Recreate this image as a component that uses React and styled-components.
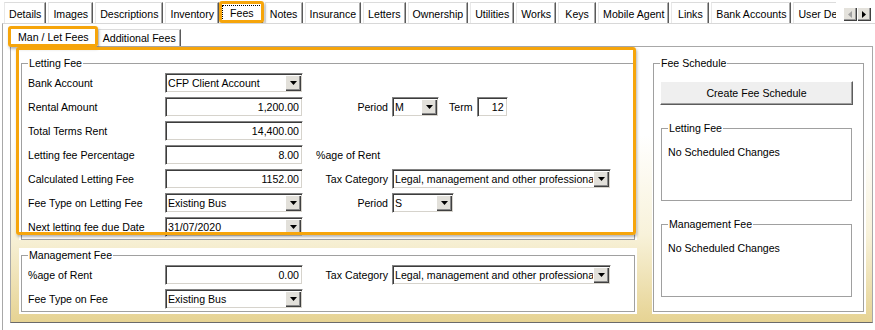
import React from 'react';
import styled, { createGlobalStyle } from 'styled-components';

const GlobalStyle = createGlobalStyle`
  html, body {
    margin: 0;
    padding: 0;
    background: #fff;
  }
  body {
    font-family: "Liberation Sans", Arial, sans-serif;
    font-size: 10.6px;
    color: #000;
  }
`;

const ORANGE = '#f6a50b';

// window + outer tab control
const Window = styled.div`
  width: 875px;
  height: 330px;
  overflow: hidden;
  background: #fff;
`;

const TabBar = styled.div`
  display: flex;
  align-items: flex-end;
  height: 23px;
  padding-left: 4px;
`;

const TabStrip = styled.div`
  display: flex;
  align-items: flex-end;
  gap: 2px;
  width: 832px;
  height: 23px;
  overflow: hidden;
  flex: none;
`;

const Tab = styled.div`
  position: relative;
  flex: none;
  box-sizing: border-box;
  height: 21px;
  min-width: ${p => p.$min || 0}px;
  padding: 2px ${p => p.$pad ?? 4}px 0;
  display: flex;
  align-items: center;
  justify-content: center;
  background: #fff;
  border-top: 1px solid #dcdcdc;
  border-left: 1px solid #e8e8e8;
  border-right: 1px solid #5a5a5a;
  box-shadow: inset -1px 0 0 #a8a8a8;
  white-space: nowrap;
`;

const Focus = styled.span`
  outline: 1px dotted #000;
  outline-offset: 0;
  padding: 1px 7px 3px;
`;

const ScrollBox = styled.div`
  align-self: flex-start;
  display: flex;
  margin-top: 7px;
  margin-left: 7px;
`;

const ScrollBtn = styled.div`
  width: 14px;
  height: 14px;
  box-sizing: border-box;
  display: flex;
  align-items: center;
  justify-content: center;
  background: #e4e2dc;
  box-shadow: inset 1px 1px 0 #fff, inset -1px -1px 0 #404040, inset -2px -2px 0 #9a9a9a;
`;

const OuterPage = styled.div`
  border-top: 1px solid #d8d8d8;
  border-left: 1px solid #a8a8a8;
  margin-left: 2px;
  padding-left: 7px;
  height: 306px;
  background: #fff;
`;

// inner tab control
const InnerTabBar = styled.div`
  display: flex;
  align-items: flex-end;
  gap: 1px;
  height: 22px;
`;

const InnerTab = styled.div`
  position: relative;
  box-sizing: border-box;
  height: ${p => (p.$active ? 19 : 17)}px;
  padding: 0 ${p => (p.$active ? 7 : 4)}px;
  display: flex;
  align-items: center;
  background: #fff;
  border-top: 1px solid #dcdcdc;
  border-left: 1px solid #e8e8e8;
  border-right: 1px solid #5a5a5a;
  box-shadow: inset -1px 0 0 #a8a8a8;
  white-space: nowrap;
`;

const InnerPage = styled.div`
  box-sizing: border-box;
  width: 863px;
  height: 277px;
  display: flex;
  gap: 15px;
  padding: 9px 6px 8px 8px;
  border: 1px solid #a8a8a8;
  border-bottom-color: #6a6a6a;
  background: linear-gradient(180deg, #ffffff 0%, #ffffff 32%, #f8f2da 68%, #e6d393 100%);
`;

const LeftColumn = styled.div`
  width: 618px;
  display: flex;
  flex-direction: column;
  gap: 8px;
`;

const Panel = styled.div`
  position: relative;
  background: #fff;
  padding: 0 2px ${p => (p.$last ? 2 : 0)}px 2px;
`;

const RightPanel = styled(Panel)`
  width: 214px;
  box-sizing: border-box;
  padding: 0 2px 2px 1px;
  display: flex;
`;

const Group = styled.fieldset`
  margin: 0;
  min-width: 0;
  flex: 1;
  border: 1px solid #a0a0a0;
  padding: 0 6px;
  box-sizing: border-box;
`;

const Legend = styled.legend`
  padding: 0 1px;
  line-height: 14px;
  font-size: 10.6px;
`;

const Rows = styled.div`
  display: flex;
  flex-direction: column;
`;

const Row = styled.div`
  display: flex;
  align-items: center;
  height: 24px;
  padding-top: ${p => (p.$first ? 1 : 0)}px;
`;

const Label = styled.span`
  width: 137px;
  flex: none;
  white-space: nowrap;
`;

const SideLabel = styled.span`
  width: 85px;
  margin-right: 4px;
  text-align: right;
  flex: none;
  white-space: nowrap;
`;

const Note = styled.span`
  margin-left: ${p => p.$gap || 13}px;
  margin-right: ${p => p.$after || 0}px;
  white-space: nowrap;
`;

const Sunken = styled.div`
  box-sizing: border-box;
  width: ${p => p.$w}px;
  height: 20px;
  flex: none;
  display: flex;
  align-items: center;
  padding: 1px;
  background: #fff;
  border: 1px solid;
  border-color: #828282 #fff #fff #828282;
  box-shadow: inset 1px 1px 0 #3c3c3c, inset -1px -1px 0 #d6d3cc;
`;

const FieldText = styled.span`
  flex: 1;
  padding: 0 2px 0 1px;
  text-align: ${p => (p.$right ? 'right' : 'left')};
  white-space: nowrap;
  overflow: hidden;
`;

const DropButton = styled.span`
  width: 16px;
  height: 16px;
  flex: none;
  display: flex;
  align-items: center;
  justify-content: center;
  background: #e2e0da;
  box-shadow: inset 1px 1px 0 #fff, inset -1px -1px 0 #404040, inset -2px -2px 0 #8a8a8a;
`;

const Highlight = styled.span`
  position: absolute;
  top: ${p => p.$t}px;
  left: ${p => p.$l}px;
  right: ${p => p.$r}px;
  bottom: ${p => p.$b}px;
  border: 3px solid ${ORANGE};
  border-radius: 3px;
  box-shadow: 1px 2px 3px rgba(0, 0, 0, 0.3);
  pointer-events: none;
  z-index: 5;
`;

const ActionButton = styled.div`
  box-sizing: border-box;
  width: 193px;
  height: 24px;
  margin-top: 11px;
  display: flex;
  align-items: center;
  justify-content: center;
  background: #efefef;
  border: 1px solid;
  border-color: #fff #5c5c5c #5c5c5c #fff;
  box-shadow: inset -1px -1px 0 #a0a0a0;
`;

const SubGroup = styled.fieldset`
  margin: ${p => p.$top}px 0 0 1px;
  width: 191px;
  height: 80px;
  box-sizing: border-box;
  border: 1px solid #a0a0a0;
  padding: 0 6px;
`;

const Message = styled.div`
  margin-top: 11px;
`;

function Arrow({ dir = 'down', color = '#000' }) {
  const pts = {
    down: '0,0 7,0 3.5,4',
    left: '4,0 4,7 0,3.5',
    right: '0,0 0,7 4,3.5',
  }[dir];
  const w = dir === 'down' ? 7 : 4;
  const h = dir === 'down' ? 4 : 7;
  return (
    <svg width={w} height={h} viewBox={`0 0 ${w} ${h}`}>
      <polygon points={pts} fill={color} />
    </svg>
  );
}

function Combo({ width, value }) {
  return (
    <Sunken $w={width}>
      <FieldText>{value}</FieldText>
      <DropButton><Arrow /></DropButton>
    </Sunken>
  );
}

function Amount({ width = 138, value }) {
  return (
    <Sunken $w={width}>
      <FieldText $right>{value}</FieldText>
    </Sunken>
  );
}

const outerTabs = [
  'Details', 'Images', 'Descriptions', 'Inventory', 'Fees', 'Notes', 'Insurance',
  'Letters', 'Ownership', 'Utilities', 'Works', 'Keys', 'Mobile Agent', 'Links',
  'Bank Accounts', 'User Defined',
];

const TAX = 'Legal, management and other professional services';

export default function App() {
  return (
    <Window>
      <GlobalStyle />
      <TabBar>
        <TabStrip>
          {outerTabs.map(name =>
            name === 'Fees' ? (
              <Tab key={name} $pad={1}>
                <Focus>{name}</Focus>
                <Highlight $t={-2} $l={-3} $r={-2} $b={0} />
              </Tab>
            ) : (
              <Tab key={name} $min={38}>{name}</Tab>
            )
          )}
        </TabStrip>
        <ScrollBox>
          <ScrollBtn><Arrow dir="left" color="#a0a0a0" /></ScrollBtn>
          <ScrollBtn><Arrow dir="right" /></ScrollBtn>
        </ScrollBox>
      </TabBar>

      <OuterPage>
        <InnerTabBar>
          <InnerTab $active>
            Man / Let Fees
            <Highlight $t={-2} $l={-3} $r={-2} $b={-1} />
          </InnerTab>
          <InnerTab>Additional Fees</InnerTab>
        </InnerTabBar>

        <InnerPage>
          <LeftColumn>
            <Panel>
              <Highlight $t={-9} $l={-3} $r={1} $b={5} />
              <Group>
                <Legend>Letting Fee</Legend>
                <Rows>
                  <Row $first>
                    <Label>Bank Account</Label>
                    <Combo width={138} value="CFP Client Account" />
                  </Row>
                  <Row>
                    <Label>Rental Amount</Label>
                    <Amount value="1,200.00" />
                    <SideLabel>Period</SideLabel>
                    <Combo width={47} value="M" />
                    <Note $gap={10} $after={4}>Term</Note>
                    <Amount width={31} value="12" />
                  </Row>
                  <Row>
                    <Label>Total Terms Rent</Label>
                    <Amount value="14,400.00" />
                  </Row>
                  <Row>
                    <Label>Letting fee Percentage</Label>
                    <Amount value="8.00" />
                    <Note>%age of Rent</Note>
                  </Row>
                  <Row>
                    <Label>Calculated Letting Fee</Label>
                    <Amount value="1152.00" />
                    <SideLabel>Tax Category</SideLabel>
                    <Combo width={219} value={TAX} />
                  </Row>
                  <Row>
                    <Label>Fee Type on Letting Fee</Label>
                    <Combo width={138} value="Existing Bus" />
                    <SideLabel>Period</SideLabel>
                    <Combo width={62} value="S" />
                  </Row>
                  <Row>
                    <Label>Next letting fee due Date</Label>
                    <Combo width={138} value="31/07/2020" />
                  </Row>
                </Rows>
              </Group>
            </Panel>

            <Panel $last>
              <Group>
                <Legend>Management Fee</Legend>
                <Rows>
                  <Row $first>
                    <Label>%age of Rent</Label>
                    <Amount value="0.00" />
                    <SideLabel>Tax Category</SideLabel>
                    <Combo width={219} value={TAX} />
                  </Row>
                  <Row>
                    <Label>Fee Type on Fee</Label>
                    <Combo width={138} value="Existing Bus" />
                  </Row>
                </Rows>
              </Group>
            </Panel>
          </LeftColumn>

          <RightPanel>
            <Group>
              <Legend>Fee Schedule</Legend>
              <ActionButton>Create Fee Schedule</ActionButton>
              <SubGroup $top={16}>
                <Legend>Letting Fee</Legend>
                <Message>No Scheduled Changes</Message>
              </SubGroup>
              <SubGroup $top={16}>
                <Legend>Management Fee</Legend>
                <Message>No Scheduled Changes</Message>
              </SubGroup>
            </Group>
          </RightPanel>
        </InnerPage>
      </OuterPage>
    </Window>
  );
}
